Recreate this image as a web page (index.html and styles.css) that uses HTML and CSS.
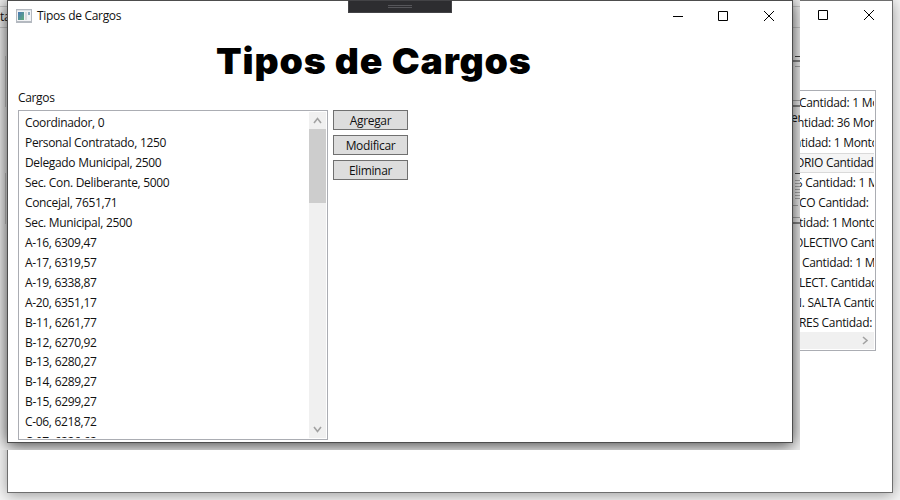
FILE: index.html
```html
<!DOCTYPE html>
<html lang="es">
<head>
<meta charset="utf-8">
<title>Tipos de Cargos</title>
<link rel="stylesheet" href="styles.css">
</head>
<body>
<main class="desktop">
  <section class="back-window">
    <div class="back-controls">
      <svg width="12" height="12"><path class="line" d="M1.5 1.5h9v9h-9z"/></svg>
      <svg width="12" height="12"><path class="line" d="M1 1l10 10M11 1L1 11"/></svg>
    </div>
    <div class="back-list">
      <ul>
        <li><span>Cantidad: 1 Monto</span></li>
        <li><span>ntidad: 36 Monto</span></li>
        <li><span>ntidad: 1 Monto:</span></li>
        <li class="selected"><span>ORIO Cantidad:</span></li>
        <li><span>S Cantidad: 1 Monto</span></li>
        <li><span>ICO Cantidad:</span></li>
        <li><span>tidad: 1 Monto:</span></li>
        <li><span>OLECTIVO Cantidad</span></li>
        <li><span>Cantidad: 1 Monto</span></li>
        <li><span>LECT. Cantidad:</span></li>
        <li><span>N. SALTA Cantidad</span></li>
        <li><span>RES Cantidad:</span></li>
      </ul>
      <div class="hscroll"><svg width="7" height="9"><path class="chev" d="M1 1l4 3.5L1 8"/></svg></div>
    </div>
  </section>

  <section class="stage">
    <span class="peek peek-left">ta</span>
    <span class="peek peek-right">er</span>
    <svg class="edges" width="800" height="450" shape-rendering="crispEdges">
      <path stroke="#c9c9c9" d="M0 6.5h7M0 27.5h7M793 6.5h7M793 27.5h7M5.5 56v51M5.5 173v51"/>
      <path stroke="#444" d="M795 56.5h5M795 173.5h5"/>
      <path stroke="#888" stroke-width="2" d="M793 61h7M793 106h7M793 223h7"/>
      <path stroke="#aaa" d="M795 66.5h5M793 100.5h7M795 180.500h5M795 183.500h5M795 186.500h5M795 189.500h5M795 192.500h5M795 195.500h5M795 198.500h5M793 205.5h5M793 217.5h7"/>
    </svg>
    <div class="window">
      <header class="titlebar">
        <svg class="app" width="16" height="14" shape-rendering="crispEdges">
          <defs><linearGradient id="g" x2="1" y2="1"><stop stop-color="#4a78b8"/><stop offset="1" stop-color="#5fac78"/></linearGradient></defs>
          <path fill="#b4b9c0" d="M0 0h16v14H0z"/><path fill="#dce1e6" d="M1 1h14v1H1z"/><path fill="#f2f3f5" d="M1 2h14v10H1z"/>
          <path fill="url(#g)" d="M2 3h6v8H2z"/><path fill="#d9dadd" d="M9 3h2v8H9z"/><path fill="#8cacbe" d="M12 3h2v3h-2z"/>
        </svg>
        <span class="caption">Tipos de Cargos</span>
        <div class="controls">
          <svg width="12" height="12"><path class="line" d="M2 6.5h10"/></svg>
          <svg width="12" height="12"><path class="line" d="M1.5 1.5h9v9h-9z"/></svg>
          <svg width="12" height="12"><path class="line" d="M1 1l10 10M11 1L1 11"/></svg>
        </div>
      </header>
      <h1><span>Tipos de Cargos</span></h1>
      <label>Cargos</label>
      <div class="content">
        <div class="listbox">
          <ul>
            <li>Coordinador, 0</li>
            <li>Personal Contratado, 1250</li>
            <li>Delegado Municipal, 2500</li>
            <li>Sec. Con. Deliberante, 5000</li>
            <li>Concejal, 7651,71</li>
            <li>Sec. Municipal, 2500</li>
            <li>A-16, 6309,47</li>
            <li>A-17, 6319,57</li>
            <li>A-19, 6338,87</li>
            <li>A-20, 6351,17</li>
            <li>B-11, 6261,77</li>
            <li>B-12, 6270,92</li>
            <li>B-13, 6280,27</li>
            <li>B-14, 6289,27</li>
            <li>B-15, 6299,27</li>
            <li>C-06, 6218,72</li>
            <li>C-07, 6226,62</li>
          </ul>
          <div class="vscroll">
            <svg width="9" height="7"><path class="chev" d="M1 6l3.500-4.500L8 6"/></svg>
            <div class="thumb"></div>
            <svg class="down" width="9" height="7"><path class="chev" d="M1 1l3.500 4.500L8 1"/></svg>
          </div>
        </div>
        <div class="buttons">
          <button>Agregar</button>
          <button>Modificar</button>
          <button>Eliminar</button>
        </div>
      </div>
    </div>
    <div class="grip"><i></i><i></i></div>
  </section>
</main>
</body>
</html>
```
FILE: styles.css
```css
* { box-sizing: border-box; }
body { margin: 0; font: 12px "Open Sans", "Noto Sans", sans-serif; letter-spacing: -0.34px; word-spacing: 0.2px; color: #111; }
ul { list-style: none; margin: 0; padding: 0; }
.desktop { position: relative; width: 900px; height: 500px; overflow: hidden; background: #f5f5f5; }
.line { fill: none; stroke: #000; stroke-width: 1; }
.chev { fill: none; stroke: #a2a2a2; stroke-width: 1.6; }

.back-window { position: absolute; left: 7px; top: 0; width: 886px; height: 493px; background: #fff; border: 1px solid #6e6e6e; box-shadow: 0 2px 14px rgba(0,0,0,.38); }
.back-controls { display: flex; justify-content: flex-end; gap: 34px; padding: 8px 17px 0 0; height: 89px; }
.back-list { margin-left: 792px; width: 76px; height: 261px; border: 1px solid #abadb3; border-left: 0; padding: 2px 1px 1px 0; }
.back-list ul { overflow: hidden; height: 239px; }
.back-list li { height: 20px; line-height: 20px; white-space: nowrap; overflow: hidden; }
.back-list li span { display: block; margin-left: -1px; }
.back-list .selected { background: #f5f5f5; border: solid #dadada; border-width: 1px 0; line-height: 18px; }
.back-list li:nth-child(2) span { margin-left: -3px; }
.back-list li:nth-child(3) span { margin-left: -6px; }
.back-list li:nth-child(4) span { margin-left: -5px; }
.back-list li:nth-child(5) span { margin-left: -4px; }
.back-list li:nth-child(6) span { margin-left: -4px; }
.back-list li:nth-child(8) span { margin-left: -6px; }
.back-list li:nth-child(9) span { margin-left: 2px; }
.back-list li:nth-child(11) span { margin-left: -7px; }
.hscroll { height: 17px; background: #f0f0f0; display: flex; align-items: center; justify-content: flex-end; padding-right: 5px; }

.stage { position: absolute; left: 0; top: 0; width: 800px; height: 450px; overflow: hidden; background: #f0f0f0; }
.edges { position: absolute; left: 0; top: 0; }
.peek { position: absolute; line-height: 16px; }
.peek-left { left: 0; top: 9px; }
.peek-right { left: 791px; top: 110px; }
.window { position: absolute; left: 7px; top: 0; width: 786px; height: 443px; background: #fff; border: 1px solid #4d4d4d; box-shadow: 0 2px 15px rgba(0,0,0,.75); }
.titlebar { display: flex; align-items: center; height: 29px; padding: 0 17px 0 8px; }
.caption { margin-left: 5px; }
.controls { margin-left: auto; display: flex; gap: 34px; }
h1 { margin: 0; height: 60px; padding-left: 208px; font: 900 36px/62px Inter, "Open Sans", sans-serif; letter-spacing: 0.8px; word-spacing: 0; color: #000; white-space: nowrap; }
h1 span { display: inline-block; transform: scaleX(1.04); transform-origin: left; }
label { display: block; height: 20px; padding-left: 10px; line-height: 16px; }
.content { display: flex; gap: 5px; padding-left: 10px; }
.listbox { width: 310px; height: 330px; border: 1px solid #abadb3; padding: 1px; display: flex; }
.listbox ul { flex: 1; padding: 1.04px 0 0 5px; overflow: hidden; }
.listbox li { height: 19.96px; line-height: 20px; white-space: nowrap; }
.vscroll { width: 17px; background: #f0f0f0; display: flex; flex-direction: column; align-items: center; padding: 5px 0; }
.thumb { width: 17px; height: 74px; background: #cdcdcd; margin-top: 5px; }
.down { margin-top: auto; }
.buttons { display: flex; flex-direction: column; gap: 5px; }
button { width: 75px; height: 20px; padding: 1px 0 0; border: 1px solid #707070; background: #ddd; color: #111; font: inherit; letter-spacing: inherit; line-height: 18px; }
.grip { position: absolute; left: 348px; top: 0; width: 104px; height: 13px; background: #2d2d30; border: 1px solid #434346; display: flex; flex-direction: column; align-items: center; gap: 1px; padding-top: 4px; }
.grip i { width: 24px; height: 1px; background: #56565a; }
```
